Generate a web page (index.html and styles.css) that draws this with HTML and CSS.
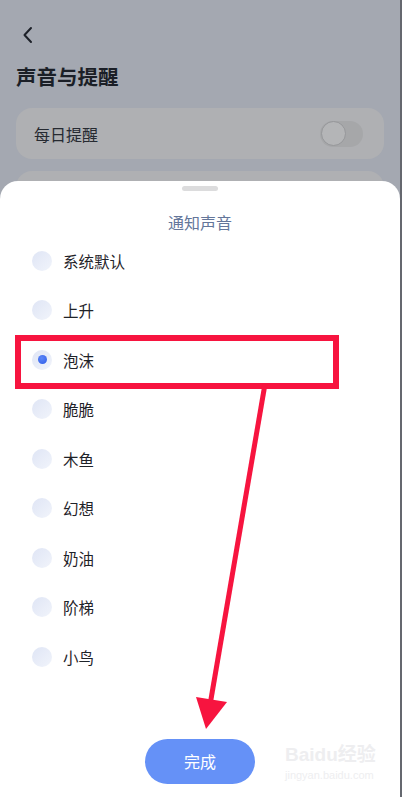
FILE: index.html
```html
<!DOCTYPE html>
<html lang="zh-CN">
<head>
    <meta charset="UTF-8">
    <meta name="viewport" content="width=device-width, initial-scale=1.0">
    <title>声音与提醒</title>
    <link rel="stylesheet" href="styles.css">
</head>
<body>
    <div class="screen">
        <div class="topbar">
            <svg class="back" width="14" height="18" viewBox="0 0 14 18">
                <path d="M10 2 L3.5 9 L10 16" fill="none" stroke="#1d2129" stroke-width="2" stroke-linecap="round" stroke-linejoin="round"/>
            </svg>
        </div>
        <h1 class="page-title">声音与提醒</h1>

        <div class="card">
            <span>每日提醒</span>
            <div class="toggle"><div class="knob"></div></div>
        </div>
        <div class="card"></div>

        <!-- 底部弹窗 -->
        <div class="sheet">
            <div class="handle"></div>
            <div class="sheet-title">通知声音</div>
            <ul class="sound-list">
                <li><span class="radio"></span>系统默认</li>
                <li><span class="radio"></span>上升</li>
                <li><span class="radio checked"></span>泡沫</li>
                <li><span class="radio"></span>脆脆</li>
                <li><span class="radio"></span>木鱼</li>
                <li><span class="radio"></span>幻想</li>
                <li><span class="radio"></span>奶油</li>
                <li><span class="radio"></span>阶梯</li>
                <li><span class="radio"></span>小鸟</li>
            </ul>
            <div class="sheet-footer">
                <button class="done-btn">完成</button>
            </div>
        </div>

        <!-- 标注 -->
        <svg class="annotation" width="400" height="797" viewBox="0 0 400 797">
            <rect x="18" y="338" width="318" height="48" fill="none" stroke="#f7143f" stroke-width="6"/>
            <line x1="265" y1="384" x2="210" y2="705" stroke="#f7143f" stroke-width="5"/>
            <polygon points="196,697 227,702 206,729" fill="#f7143f"/>
        </svg>

        <div class="watermark">
            <div class="wm-logo">Baidu经验</div>
            <div class="wm-url">jingyan.baidu.com</div>
        </div>
    </div>
</body>
</html>
```

FILE: styles.css
```css
body {
    margin: 0;
    background: #65686f;
    font-family: "Noto Sans CJK SC", "Noto Sans", sans-serif;
}

.screen {
    position: relative;
    width: 400px;
    height: 797px;
    background: #a4a8b1;
    overflow: hidden;
}

.topbar {
    padding: 26px 0 0 21px;
    height: 20px;
}

.back {
    display: block;
}

.page-title {
    margin: 16px 0 0 16px;
    font-size: 20.5px;
    line-height: 28px;
    font-weight: 700;
    color: #1b1f27;
}

.card {
    display: flex;
    align-items: center;
    justify-content: space-between;
    height: 51px;
    margin: 18px 16px 0;
    padding: 0 21px 0 18px;
    background: #afb0b3;
    border-radius: 16px;
    font-size: 16px;
    color: #262a31;
}

.card + .card {
    margin-top: 12px;
}

.toggle {
    width: 43px;
    height: 26px;
    border-radius: 13px;
    background: #a6a7a9;
    display: flex;
    align-items: center;
}

.knob {
    width: 23px;
    height: 23px;
    border-radius: 50%;
    margin-left: 1px;
    background: #b4b5b7;
    border: 1px solid #96979a;
}

.sheet {
    position: absolute;
    top: 181px;
    left: 0;
    right: 0;
    bottom: 0;
    background: #fff;
    border-radius: 18px 18px 0 0;
    padding-top: 5px;
}

.handle {
    width: 36px;
    height: 5px;
    margin: 0 auto;
    border-radius: 3px;
    background: #dcdcdd;
}

.sheet-title {
    margin-top: 19px;
    text-align: center;
    font-size: 16px;
    line-height: 24px;
    color: #64769a;
}

.sound-list {
    list-style: none;
    margin: 2px 0 0;
    padding: 0 0 0 32px;
}

.sound-list li {
    display: flex;
    align-items: center;
    height: 49.5px;
    font-size: 15.5px;
    color: #1f2329;
}

.radio {
    width: 20px;
    height: 20px;
    border-radius: 50%;
    margin-right: 11px;
    background: linear-gradient(135deg, #dfe5f5, #f1f4fb);
    display: flex;
    align-items: center;
    justify-content: center;
}

.radio.checked::after {
    content: "";
    width: 9px;
    height: 9px;
    border-radius: 50%;
    background: radial-gradient(circle at 40% 35%, #5b86f7, #2f5ce8);
}

.sheet-footer {
    display: flex;
    justify-content: center;
    margin-top: 57px;
}

.done-btn {
    width: 110px;
    height: 45px;
    border: none;
    border-radius: 23px;
    background: #6591f7;
    color: #fff;
    font-family: inherit;
    font-size: 16px;
}

.annotation {
    position: absolute;
    top: 0;
    left: 0;
}

.watermark {
    position: absolute;
    left: 285px;
    top: 743px;
    color: #eeeef0;
}

.wm-logo {
    font-family: "Liberation Sans", "Noto Sans CJK SC", sans-serif;
    font-size: 19px;
    line-height: 24px;
    font-weight: bold;
}

.wm-url {
    font-family: "Liberation Sans", sans-serif;
    font-size: 11px;
    line-height: 16px;
}
```
